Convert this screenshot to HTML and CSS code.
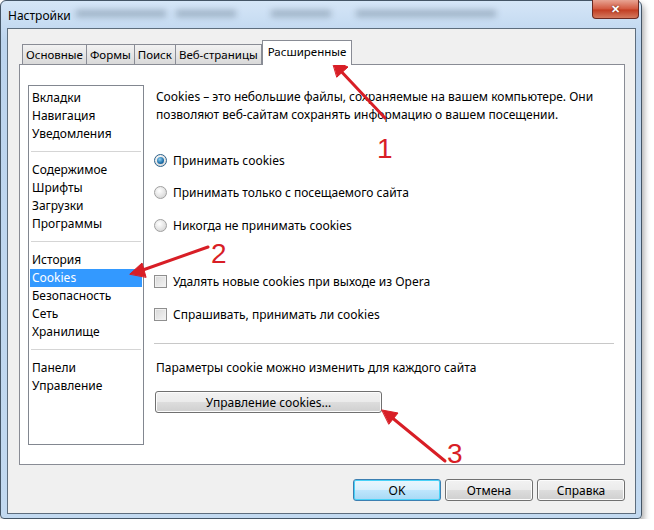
FILE: index.html
```html
<!DOCTYPE html>
<html lang="ru">
  <head>
    <meta charset="utf-8" />
    <title>Настройки</title>
    <link rel="stylesheet" href="styles.css">
  </head>
  <body>
    <div class="window">
      <div class="titlebar">
        <span class="title">Настройки</span>
        <span class="blur blur-1"></span>
        <span class="blur blur-2"></span>
        <span class="blur blur-3"></span>
        <span class="blur blur-4"></span>
        <span class="close">&#x2715;</span>
      </div>
      <div class="client">
        <div class="tabs">
          <div class="tab">Основные</div>
          <div class="tab">Формы</div>
          <div class="tab">Поиск</div>
          <div class="tab">Веб-страницы</div>
          <div class="tab active">Расширенные</div>
        </div>
        <div class="panel">
          <ul class="sidebar">
            <li>Вкладки</li>
            <li>Навигация</li>
            <li>Уведомления</li>
            <li class="sep"></li>
            <li>Содержимое</li>
            <li>Шрифты</li>
            <li>Загрузки</li>
            <li>Программы</li>
            <li class="sep"></li>
            <li>История</li>
            <li class="selected">Cookies</li>
            <li>Безопасность</li>
            <li>Сеть</li>
            <li>Хранилище</li>
            <li class="sep"></li>
            <li>Панели</li>
            <li>Управление</li>
          </ul>
          <div class="content">
            <p class="intro">Cookies – это небольшие файлы, сохраняемые на вашем компьютере. Они позволяют веб-сайтам сохранять информацию о вашем посещении.</p>
            <label class="option opt-1"><span class="radio checked"></span>Принимать cookies</label>
            <label class="option opt-2"><span class="radio"></span>Принимать только с посещаемого сайта</label>
            <label class="option opt-3"><span class="radio"></span>Никогда не принимать cookies</label>
            <label class="option opt-4"><span class="check"></span>Удалять новые cookies при выходе из Opera</label>
            <label class="option opt-5"><span class="check"></span>Спрашивать, принимать ли cookies</label>
            <hr class="divider" />
            <div class="hint">Параметры cookie можно изменить для каждого сайта</div>
            <button class="btn manage">Управление cookies...</button>
          </div>
        </div>
        <div class="footer">
          <button class="btn default">OK</button>
          <button class="btn">Отмена</button>
          <button class="btn">Справка</button>
        </div>
      </div>
    </div>

    <svg class="marks" width="654" height="530" viewBox="0 0 654 530">
      <g stroke="#d81e26" stroke-width="3" stroke-linecap="round" fill="#d81e26">
        <line x1="385" y1="118" x2="338" y2="68" />
        <polygon points="332,60 348,67 337,77" stroke-width="1" />
        <line x1="208" y1="247" x2="140" y2="271" />
        <polygon points="130,274 142,263 146,277" stroke-width="1" />
        <line x1="445" y1="461" x2="390" y2="416" />
        <polygon points="382,410 398,413 389,424" stroke-width="1" />
      </g>
      <g class="num" fill="#d81e26">
        <text x="377" y="158">1</text>
        <text x="211" y="263">2</text>
        <text x="447" y="463">3</text>
      </g>
    </svg>
  </body>
</html>
```

FILE: styles.css
```css
* {
  box-sizing: border-box;
}
body {
  margin: 0;
  background-color: #fff;
  font-family: "Noto Sans", "Open Sans", sans-serif;
  font-size: 12px;
  color: #000;
  position: relative;
}
.window {
  width: 642px;
  height: 519px;
  border: 1px solid #445566;
  border-radius: 6px 6px 4px 4px;
  background: linear-gradient(#d5e6f7, #bcd4ee 40px, #c2d9f0);
  box-shadow: 2px 4px 6px rgba(0, 0, 0, 0.35);
  display: flex;
  flex-direction: column;
}
.titlebar {
  flex-shrink: 0;
  height: 27px;
  position: relative;
  display: flex;
  align-items: center;
  padding: 2px 0 0 7px;
}
.title {
  position: relative;
  z-index: 1;
  font-size: 12px;
}
.blur {
  position: absolute;
  top: 9px;
  height: 7px;
  background: rgba(70, 90, 110, 0.35);
  filter: blur(3px);
}
.blur-1 { left: 75px; width: 90px; }
.blur-2 { left: 175px; width: 60px; }
.blur-3 { left: 270px; width: 60px; }
.blur-4 { left: 355px; width: 140px; }
.close {
  position: absolute;
  right: 2px;
  top: -1px;
  width: 47px;
  height: 19px;
  border: 1px solid #6b2a22;
  border-top: none;
  border-radius: 0 0 4px 4px;
  background: linear-gradient(#e8a493, #d2583f 50%, #c23d22 55%, #d47a5f);
  color: #fff;
  font-size: 11px;
  font-weight: bold;
  text-align: center;
  line-height: 18px;
  text-shadow: 0 0 2px #5a1a10;
}
.client {
  flex: 1;
  margin: 0 5px 4px 6px;
  background-color: #f0f0f0;
  border: 1px solid #5d6d7d;
  display: flex;
  flex-direction: column;
  padding: 11px 10px 0 11px;
}
.tabs {
  display: flex;
  padding-left: 3px;
  height: 24px;
  align-items: flex-end;
  position: relative;
  z-index: 1;
}
.tab {
  height: 20px;
  padding: 0 3px;
  border: 1px solid #898c95;
  border-bottom: none;
  margin-right: -1px;
  background: linear-gradient(#f2f2f2, #e6e6e6 50%, #d9d9d9);
  font-size: 11.5px;
  line-height: 19px;
}
.tab.active {
  height: 25px;
  margin-left: 1px;
  padding: 0 5px;
  background: #fff;
  line-height: 22px;
  margin-bottom: -1px;
}
.panel {
  flex-shrink: 0;
  height: 401px;
  background: #fff;
  border: 1px solid #898c95;
  display: flex;
  padding: 20px 10px 0 8px;
}
.sidebar {
  list-style: none;
  margin: 0;
  width: 116px;
  height: 360px;
  border: 1px solid #828790;
  padding: 3px 1px 0 1px;
}
.sidebar li {
  height: 18px;
  line-height: 18px;
  padding-left: 2px;
}
.sidebar li.sep {
  height: 1px;
  margin: 8px 1px 9px 1px;
  background: #d5d5d5;
}
.sidebar li.selected {
  background: #3399ff;
  color: #fff;
}
.content {
  flex: 1;
  margin-left: 12px;
  display: flex;
  flex-direction: column;
  align-items: flex-start;
}
.intro {
  margin: 3px 0 0 0;
  line-height: 18px;
}
.option {
  display: flex;
  align-items: center;
  height: 18px;
  margin-left: -2px;
}
.opt-1 { margin-top: 27px; }
.opt-2 { margin-top: 14px; }
.opt-3 { margin-top: 15px; }
.opt-4 { margin-top: 38px; }
.opt-5 { margin-top: 15px; }
.radio {
  width: 13px;
  height: 13px;
  border: 1px solid #a0a0a0;
  border-radius: 50%;
  background: radial-gradient(circle at 40% 35%, #ffffff, #dcdcdc 70%, #c8c8c8);
  margin-right: 6px;
  position: relative;
}
.radio.checked {
  border-color: #2c628b;
}
.radio.checked::after {
  content: "";
  position: absolute;
  left: 2px;
  top: 2px;
  width: 7px;
  height: 7px;
  border-radius: 50%;
  background: radial-gradient(circle at 40% 35%, #8fd2f5, #1d6ea8 60%, #0d4a7a);
}
.check {
  width: 13px;
  height: 13px;
  border: 1px solid #8f8f8f;
  background: linear-gradient(135deg, #d8d8d8, #f4f4f4);
  box-shadow: inset 0 0 0 1px #f0f0f0;
  margin-right: 6px;
}
.divider {
  align-self: stretch;
  margin: 20px 0 0 -2px;
  border: none;
  border-top: 1px solid #c8c8c8;
}
.hint {
  margin-top: 15px;
  height: 18px;
  line-height: 18px;
}
.btn {
  font-family: inherit;
  font-size: 12px;
  color: #000;
  height: 22px;
  border: 1px solid #707070;
  border-radius: 3px;
  background: linear-gradient(#f2f2f2, #ebebeb 50%, #dddddd 51%, #cfcfcf);
  box-shadow: inset 0 0 0 1px #fcfcfc;
  padding: 0;
}
.manage {
  margin-top: 14px;
  margin-left: -1px;
  width: 227px;
}
.footer {
  display: flex;
  justify-content: flex-end;
  gap: 4px;
  margin-top: 14px;
  padding-right: 0;
}
.footer .btn {
  width: 88px;
}
.btn.default {
  border-color: #3c7fb1;
  background: linear-gradient(#eaf6fd, #d9f0fc 50%, #bee6fd 51%, #a7d9f5);
  box-shadow: inset 0 0 0 1px #48d2f8;
}
.marks {
  position: absolute;
  left: 0;
  top: 0;
}
.num text {
  font-family: "Liberation Sans", sans-serif;
  font-size: 28px;
}
```
